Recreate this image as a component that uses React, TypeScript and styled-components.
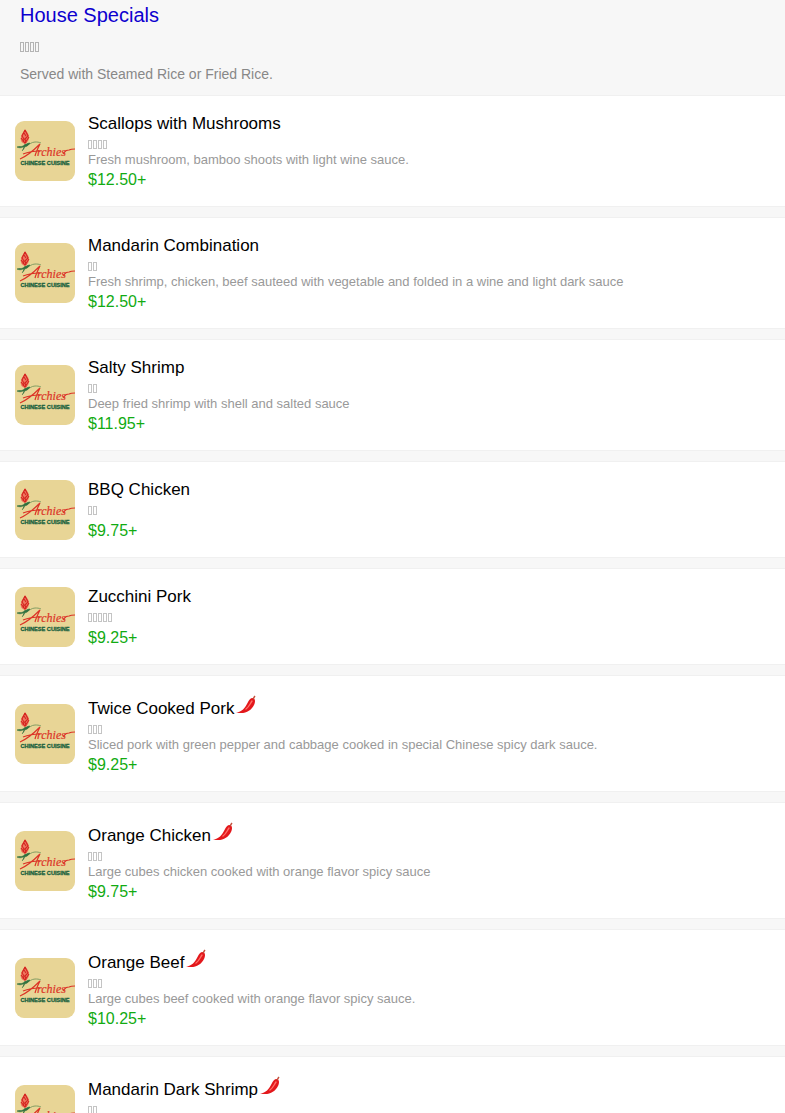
import React from 'react';
import styled, { createGlobalStyle } from 'styled-components';

const GlobalStyle = createGlobalStyle`
  body {
    margin: 0;
    background: #f7f7f7;
    color: #000;
    font-family: "Liberation Sans", Arial, sans-serif;
  }
`;

const Header = styled.header`
  padding: 3px 20px 13px;
  color: #888;
  font-size: 14px;
  line-height: 16px;
`;

const Heading = styled.h1`
  margin: 0 0 12px;
  font-size: 20px;
  font-weight: 400;
  line-height: 24px;
`;

const HeadingLink = styled.a`
  color: #0d00cf;
  text-decoration: none;
`;

const HeaderText = styled.p`
  margin: 0;
`;

const List = styled.ul`
  display: flex;
  flex-direction: column;
  gap: 10px;
  margin: 0;
  padding: 0;
  list-style: none;
`;

const Card = styled.li`
  display: flex;
  align-items: center;
  gap: 13px;
  padding: 17px 15px;
  border-top: 1px solid #f0f0f0;
  border-bottom: 1px solid #f0f0f0;
  background: #fff;
`;

const LogoImage = styled.svg`
  flex: none;
  width: 60px;
  height: 60px;
  border-radius: 9px;
`;

const Details = styled.div`
  flex: 1;
  min-width: 0;
`;

const Name = styled.h2<{ $spicy?: boolean }>`
  display: flex;
  align-items: flex-end;
  height: ${(p) => (p.$spicy ? 26 : 21)}px;
  margin: 0 0 3px;
  font-size: 17px;
  font-weight: 400;
  line-height: 20px;
`;

const ChiliIcon = styled.svg`
  align-self: flex-start;
  width: 20px;
  height: 20px;
  margin: 2px 0 0 2px;
`;

const Note = styled.p`
  margin: 0;
  color: #999;
  font-size: 13px;
  line-height: 15px;
`;

const BoxRow = styled.div<{ $large?: boolean }>`
  display: flex;
  align-items: center;
  gap: 1px;
  height: ${(p) => (p.$large ? 16 : 15)}px;
  margin-bottom: ${(p) => (p.$large ? 11 : 0)}px;
`;

const Box = styled.span<{ $large?: boolean }>`
  box-sizing: border-box;
  width: 4px;
  height: ${(p) => (p.$large ? 10 : 9)}px;
  border: 1px solid ${(p) => (p.$large ? '#b4b4b4' : '#c4c4c4')};
`;

const Price = styled.p`
  margin: 4px 0 0;
  color: #12ab12;
  font-size: 16px;
  line-height: 18px;
`;

const Logo = () => (
  <LogoImage viewBox="0 0 60 60" role="img" aria-label="Archies Chinese Cuisine">
    <rect width="60" height="60" fill="#e8d596" />
    <path d="M10 8c1 2 4 4 4 8 0 3-1 5-4 7-3-1-5-3-4-7 0-3 3-5 4-8z" fill="#ee7760" />
    <path d="M10 9l-3 6 2 3-1 3M10 9l3 6-3 3 1 4M6 17l4 5 4-6M9 12l2 3" fill="none" stroke="#d3261f" strokeWidth="1.1" />
    <path d="M10 24c5 0 6-3 10-3 2 0 4 0 6 1" fill="none" stroke="#6a8f57" strokeWidth=".8" />
    <path d="M2 26c3-1 4 0 6-1s4-3 7-3c-2 3-4 4-7 4-2 1-4 1-6 0zM10 23c0 3-1 5-3 7" fill="#2f7040" stroke="#2f7040" strokeWidth=".6" />
    <path d="M5 38c7-3 14-9 20-15-2 4-4 8-5 12M8 33c5-2 11-3 17-3" fill="none" stroke="#dc3427" strokeWidth="1.2" />
    <text x="22" y="35" fill="#dc3427" stroke="#dc3427" strokeWidth=".2" fontFamily="Liberation Serif" fontStyle="italic" fontSize="12">rchies</text>
    <path d="M48 33c3-4 4-4 6-4 2-1 4-1 6-1" fill="none" stroke="#dc3427" strokeWidth="1.1" />
    <text x="30" y="44" textAnchor="middle" fill="#17603d" stroke="#17603d" strokeWidth=".3" fontFamily="Liberation Sans" fontWeight="700" fontSize="5.6">CHINESE CUISINE</text>
  </LogoImage>
);

const Chili = () => (
  <ChiliIcon viewBox="0 0 20 20" role="img" aria-label="Spicy">
    <path d="M0 17.500C6 17 9 13 11.500 8C13 5 14 3 17 3C19.500 4 19.500 7 18 10C15 16 9 19.500 0 17.500z" fill="#e3181c" />
    <path d="M10 14c3-2 4-5 6-8" fill="none" stroke="#ff7068" strokeWidth="1.400" strokeLinecap="round" />
    <path d="M17 4c1-1 1-2 2-3" fill="none" stroke="#c4503c" strokeWidth="1.600" />
  </ChiliIcon>
);

// A row of empty glyph boxes, one for each character of the dish's second name.
const Boxes = ({ count, large }: { count: number; large?: boolean }) => (
  <BoxRow $large={large}>
    {Array.from({ length: count }, (_, i) => <Box key={i} $large={large} />)}
  </BoxRow>
);

type Dish = { name: string; alt: number; note?: string; price: string; spicy?: boolean };

const dishes: Dish[] = [
  { name: 'Scallops with Mushrooms', alt: 4, note: 'Fresh mushroom, bamboo shoots with light wine sauce.', price: '$12.50+' },
  { name: 'Mandarin Combination', alt: 2, note: 'Fresh shrimp, chicken, beef sauteed with vegetable and folded in a wine and light dark sauce', price: '$12.50+' },
  { name: 'Salty Shrimp', alt: 2, note: 'Deep fried shrimp with shell and salted sauce', price: '$11.95+' },
  { name: 'BBQ Chicken', alt: 2, price: '$9.75+' },
  { name: 'Zucchini Pork', alt: 5, price: '$9.25+' },
  { name: 'Twice Cooked Pork', alt: 3, note: 'Sliced pork with green pepper and cabbage cooked in special Chinese spicy dark sauce.', price: '$9.25+', spicy: true },
  { name: 'Orange Chicken', alt: 3, note: 'Large cubes chicken cooked with orange flavor spicy sauce', price: '$9.75+', spicy: true },
  { name: 'Orange Beef', alt: 3, note: 'Large cubes beef cooked with orange flavor spicy sauce.', price: '$10.25+', spicy: true },
  { name: 'Mandarin Dark Shrimp', alt: 2, note: 'Shrimp cooked with spicy dark sauce', price: '$12.50+', spicy: true },
];

export default function App() {
  return (
    <>
      <GlobalStyle />
      <Header>
        <Heading><HeadingLink href="#house-specials">House Specials</HeadingLink></Heading>
        <Boxes count={4} large />
        <HeaderText>Served with Steamed Rice or Fried Rice.</HeaderText>
      </Header>
      <List>
        {dishes.map((dish) => (
          <Card key={dish.name}>
            <Logo />
            <Details>
              <Name $spicy={dish.spicy}>{dish.name}{dish.spicy && <Chili />}</Name>
              <Boxes count={dish.alt} />
              {dish.note && <Note>{dish.note}</Note>}
              <Price>{dish.price}</Price>
            </Details>
          </Card>
        ))}
      </List>
    </>
  );
}
